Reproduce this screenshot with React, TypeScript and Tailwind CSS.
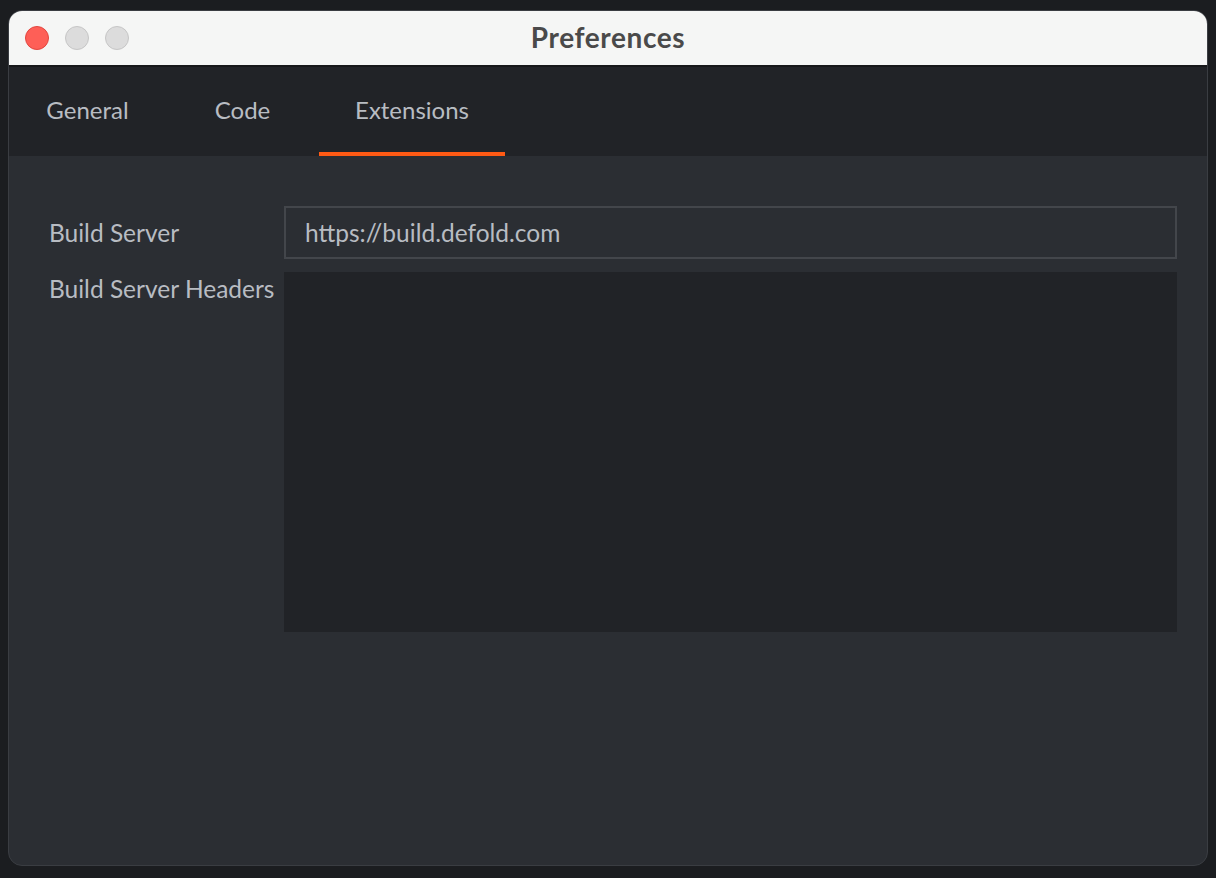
export default function App() {
  const font = { fontFamily: '"Source Sans Pro", Lato, "Noto Sans", sans-serif' };
  return (
    <div className="w-[1216px] h-[878px] bg-[#1b1d20] pt-[10px] pl-[8px]" style={font}>
      <div className="w-[1200px] h-[856px] rounded-[14px] overflow-hidden bg-[#2b2e33] flex flex-col border border-[#3a3d42]">
        {/* title bar */}
        <div className="relative h-[56px] bg-[#f5f6f5] border-b-2 border-[#17181a] flex items-center justify-center">
          <div className="absolute left-[16px] top-[15px] flex gap-[16px]">
            <span className="w-[24px] h-[24px] rounded-full bg-[#fe5f57] border border-[#e2463f]" />
            <span className="w-[24px] h-[24px] rounded-full bg-[#dcdcdc] border border-[#c6c6c6]" />
            <span className="w-[24px] h-[24px] rounded-full bg-[#dcdcdc] border border-[#c6c6c6]" />
          </div>
          <span className="text-[28px] font-bold text-[#4a4a4a] tracking-[0.6px] -mt-[2px]">Preferences</span>
        </div>
        {/* tabs */}
        <div className="h-[89px] bg-[#212327] flex text-[24px] text-[#b8bcc2]">
          <div className="w-[157px] flex items-center justify-center pb-[4px]">General</div>
          <div className="w-[153px] flex items-center justify-center pb-[4px]">Code</div>
          <div className="w-[186px] flex items-center justify-center pb-[4px] relative">
            Extensions
            <span className="absolute left-0 right-0 bottom-0 h-[4px] bg-[#ff5a14]" />
          </div>
        </div>
        {/* content */}
        <div className="pt-[50px] pl-[40px] pr-[30px] text-[24.5px] text-[#b8bcc2]">
          <div className="flex items-center">
            <div className="w-[235px] pt-[1px]">Build Server</div>
            <div className="flex-1 h-[53px] border-2 border-[#43464b] bg-[#2b2e33] flex items-center pl-[19px] pt-[1px]">
              https://build.defold.com
            </div>
          </div>
          <div className="flex mt-[13px]">
            <div className="w-[235px] whitespace-nowrap -mt-[1px]">Build Server Headers</div>
            <div className="flex-1 h-[360px] bg-[#212327]" />
          </div>
        </div>
      </div>
    </div>
  );
}
